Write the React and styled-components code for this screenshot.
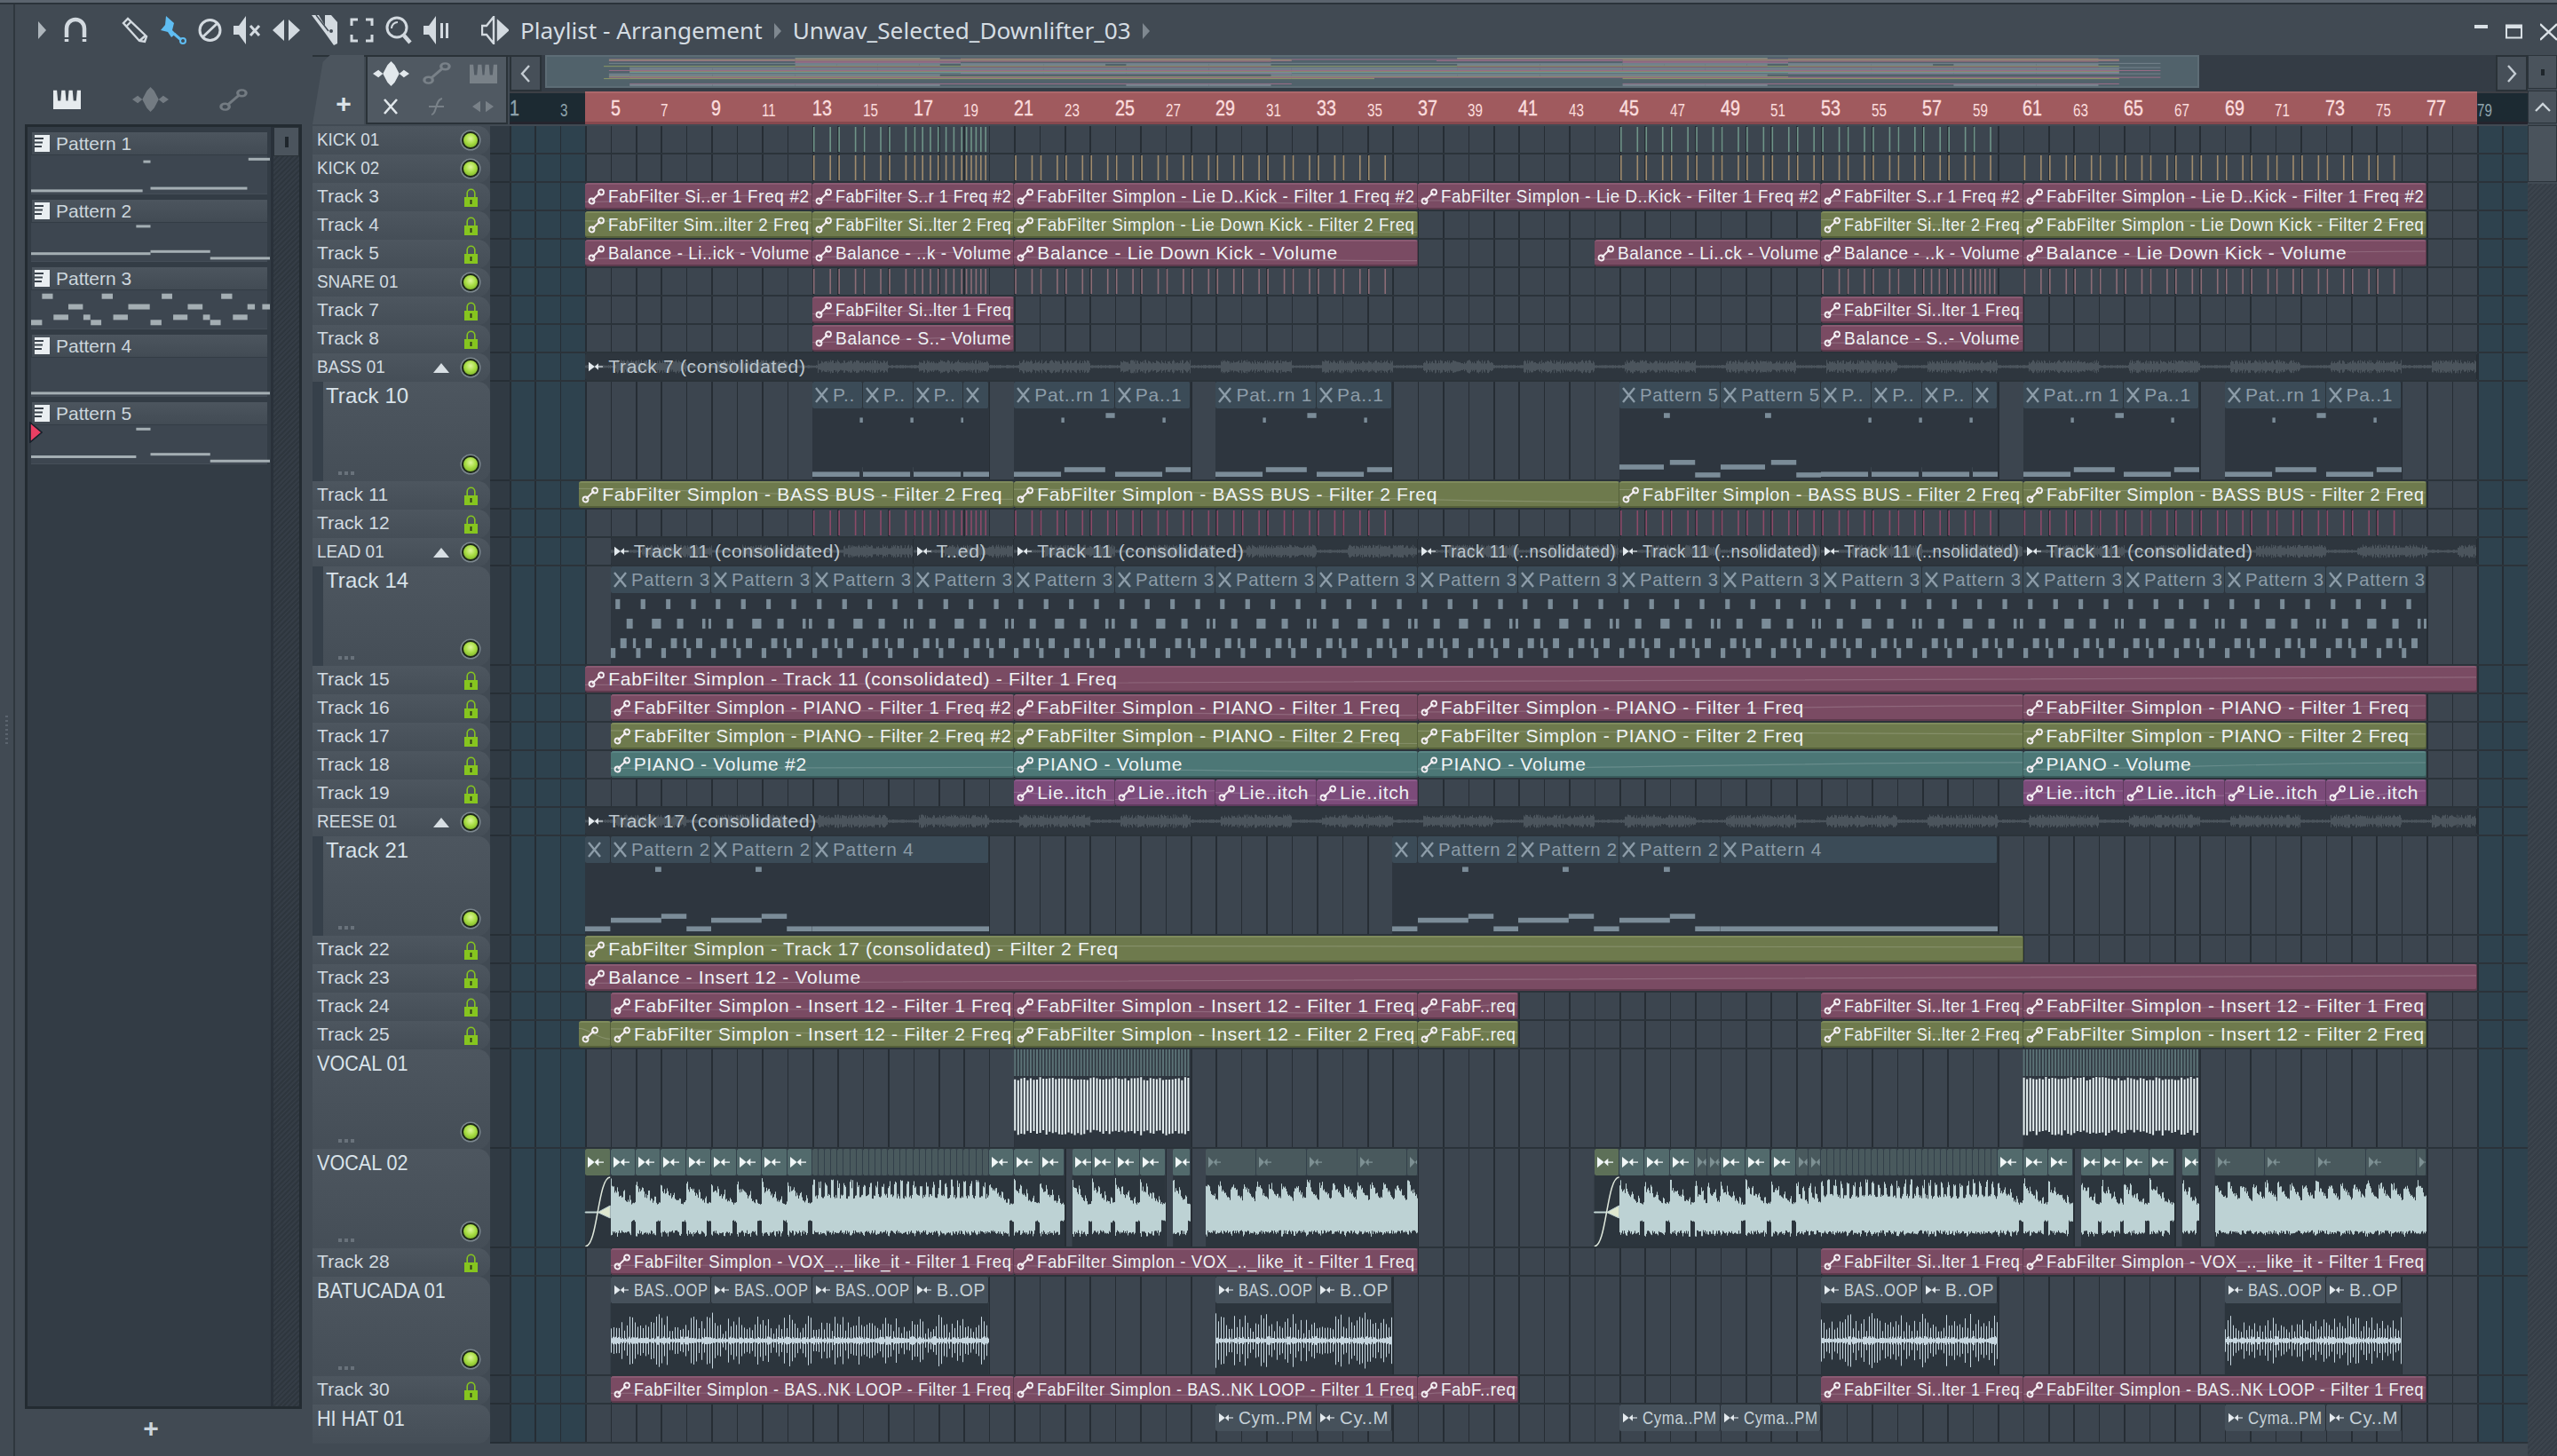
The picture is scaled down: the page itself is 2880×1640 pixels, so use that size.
import React from "react";
import styled, { createGlobalStyle } from "styled-components";

const FONT = `"Liberation Sans", Arial, sans-serif`;
const BAR = 28.41;
const barX = (n) => (n - 1) * BAR;

const GlobalStyle = createGlobalStyle`
  html, body { margin: 0; padding: 0; background: #414a53; }
  body { font-family: ${FONT}; color: #dfe7ec; }
`;

// ---- seeded noise so the wave forms stay the same between runs
const makeRandom = (seed) => {
  let s = seed;
  return () => {
    s = (s * 16807) % 2147483647;
    return (s & 0xffff) / 0xffff;
  };
};

const measureCtx = document.createElement("canvas").getContext("2d");
const LABEL_SPACING = 0.7;
function fitScale(label, room) {
  measureCtx.font = `21px ${FONT}`;
  const natural = measureCtx.measureText(label).width + label.length * LABEL_SPACING;
  return Math.min(1, room / natural);
}

// ---- pattern notes: [from, to, y] as fractions of a 4 bar clip
const PATTERNS = {
  "Pattern 1": {
    h: 0.07,
    notes: [[0.47, 0.5, 0.14], [0.91, 1, 0.07], [0, 0.467, 0.96], [0.5, 0.905, 0.89]],
  },
  "Pattern 2": {
    h: 0.07,
    notes: [[0.44, 0.5, 0.06], [0, 0.5, 0.83], [0.5, 0.75, 0.77], [0.75, 1, 0.96]],
  },
  "Pattern 3": {
    h: 0.14,
    notes: [
      [0.046, 0.091, 0.1], [0.296, 0.342, 0.1], [0.547, 0.591, 0.1], [0.796, 0.842, 0.1],
      [0.156, 0.217, 0.42], [0.407, 0.497, 0.42], [0.656, 0.718, 0.42], [0.906, 0.937, 0.42], [0.968, 1, 0.42],
      [0.094, 0.156, 0.74], [0.219, 0.248, 0.74], [0.344, 0.405, 0.74], [0.595, 0.655, 0.74], [0.72, 0.749, 0.74], [0.845, 0.906, 0.74],
      [0, 0.046, 0.9], [0.25, 0.294, 0.9], [0.5, 0.546, 0.9], [0.75, 0.794, 0.9],
    ],
  },
  "Pattern 4": { h: 0.07, notes: [[0, 3, 0.96]] },
  "Pattern 5": {
    h: 0.07,
    notes: [[0.44, 0.5, 0.07], [0, 0.44, 0.85], [0.5, 0.75, 0.78], [0.75, 1, 0.97]],
  },
};

const auto = (tone, list) =>
  list.map(([start, end, label]) => ({ type: "auto", tone, start, end, label }));
const audio = (list) => list.map(([start, end, label]) => ({ type: "audio", start, end, label }));
const pat = (name, list) =>
  list.map(([start, end, label, offset]) => ({ type: "pattern", name, start, end, label, offset }));

const repeatFour = (from, count, name) =>
  Array.from({ length: count }, (_, i) => [from + i * 4, from + (i + 1) * 4, name]);

const tickRuns = (tone, seed, runs) => ({ tone, seed, runs });

const F1 = "FabFilter Simplon - Lie D..Kick - Filter 1 Freq #2";
const F2 = "FabFilter Simplon - Lie Down Kick - Filter 2 Freq";
const BAL = "Balance - Lie Down Kick - Volume";
const BB = "FabFilter Simplon - BASS BUS - Filter 2 Freq";
const T11 = "Track 11 (consolidated)";
const T11B = "Track 11 (..nsolidated)";
const P1 = "FabFilter Simplon - PIANO - Filter 1 Freq";
const P2 = "FabFilter Simplon - PIANO - Filter 2 Freq";
const I1 = "FabFilter Simplon - Insert 12 - Filter 1 Freq";
const I2 = "FabFilter Simplon - Insert 12 - Filter 2 Freq";
const VX = "FabFilter Simplon - VOX_.._like_it - Filter 1 Freq";
const BL = "FabFilter Simplon - BAS..NK LOOP - Filter 1 Freq";
const S1 = "FabFilter Si..lter 1 Freq";
const S2 = "FabFilter Si..lter 2 Freq";

const TRACKS = [
  { name: "KICK 01", led: true, ticks: tickRuns("#6f9488", 3, [[13, 20], [45, 60]]) },
  { name: "KICK 02", led: true, ticks: tickRuns("#a08c6e", 7, [[13, 20], [21, 36], [45, 60], [61, 76]]) },
  {
    name: "Track 3",
    clips: auto("pink", [
      [4, 13, "FabFilter Si..er 1 Freq #2"], [13, 21, "FabFilter S..r 1 Freq #2"], [21, 37, F1],
      [37, 53, F1], [53, 61, "FabFilter S..r 1 Freq #2"], [61, 77, F1],
    ]),
  },
  {
    name: "Track 4",
    clips: auto("olive", [
      [4, 13, "FabFilter Sim..ilter 2 Freq"], [13, 21, S2], [21, 37, F2], [53, 61, S2], [61, 77, F2],
    ]),
  },
  {
    name: "Track 5",
    clips: auto("pink", [
      [4, 13, "Balance - Li..ick - Volume"], [13, 21, "Balance - ..k - Volume"], [21, 37, BAL],
      [44, 53, "Balance - Li..ck - Volume"], [53, 61, "Balance - ..k - Volume"], [61, 77, BAL],
    ]),
  },
  { name: "SNARE 01", led: true, ticks: tickRuns("#8c6c76", 11, [[13, 20], [21, 36], [53, 60], [61, 76]]) },
  { name: "Track 7", clips: auto("pink", [[13, 21, S1], [53, 61, S1]]) },
  { name: "Track 8", clips: auto("pink", [[13, 21, "Balance - S..- Volume"], [53, 61, "Balance - S..- Volume"]]) },
  { name: "BASS 01", led: true, group: true, clips: audio([[4, 79, "Track 7 (consolidated)"]]) },
  {
    name: "Track 10",
    child: true,
    clips: [
      ...pat("Pattern 1", [[13, 15, "P.."], [15, 17, "P.."], [17, 19, "P.."], [19, 20, ""]]),
      ...pat("Pattern 1", [[21, 25, "Pat..rn 1"], [25, 28, "Pa..1"], [29, 33, "Pat..rn 1"], [33, 36, "Pa..1"]]),
      ...pat("Pattern 5", [[45, 49, "Pattern 5"], [49, 53, "Pattern 5"]]),
      ...pat("Pattern 1", [[53, 55, "P.."], [55, 57, "P.."], [57, 59, "P.."], [59, 60, ""]]),
      ...pat("Pattern 1", [[61, 65, "Pat..rn 1"], [65, 68, "Pa..1"], [69, 73, "Pat..rn 1"], [73, 76, "Pa..1"]]),
    ],
  },
  { name: "Track 11", clips: auto("olive", [[3.75, 21, BB], [21, 45, BB], [45, 61, BB], [61, 77, BB]]) },
  { name: "Track 12", ticks: tickRuns("#8c4a68", 17, [[13, 20], [21, 36], [45, 60], [61, 76]]) },
  {
    name: "LEAD 01",
    led: true,
    group: true,
    clips: audio([[5, 17, T11], [17, 21, "T..ed)"], [21, 37, T11], [37, 45, T11B], [45, 53, T11B], [53, 61, "Track 11 (..nsolidated)"], [61, 79, T11]]),
  },
  { name: "Track 14", child: true, clips: pat("Pattern 3", repeatFour(5, 18, "Pattern 3")) },
  { name: "Track 15", clips: auto("pink", [[4, 79, "FabFilter Simplon - Track 11 (consolidated) - Filter 1 Freq"]]) },
  {
    name: "Track 16",
    clips: auto("pink", [[5, 21, "FabFilter Simplon - PIANO - Filter 1 Freq #2"], [21, 37, P1], [37, 61, P1], [61, 77, P1]]),
  },
  {
    name: "Track 17",
    clips: auto("olive", [[5, 21, "FabFilter Simplon - PIANO - Filter 2 Freq #2"], [21, 37, P2], [37, 61, P2], [61, 77, P2]]),
  },
  {
    name: "Track 18",
    clips: auto("teal", [[5, 21, "PIANO - Volume #2"], [21, 37, "PIANO - Volume"], [37, 61, "PIANO - Volume"], [61, 77, "PIANO - Volume"]]),
  },
  {
    name: "Track 19",
    clips: auto("purple", repeatFour(21, 4, "Lie..itch").concat(repeatFour(61, 4, "Lie..itch"))),
  },
  { name: "REESE 01", led: true, group: true, clips: audio([[4, 79, "Track 17 (consolidated)"]]) },
  {
    name: "Track 21",
    child: true,
    clips: [
      ...pat("Pattern 2", [[4, 5, "", 3], [5, 9, "Pattern 2"], [9, 13, "Pattern 2"]]),
      ...pat("Pattern 4", [[13, 20, "Pattern 4"]]),
      ...pat("Pattern 2", [[36, 37, "", 3], [37, 41, "Pattern 2"], [41, 45, "Pattern 2"], [45, 49, "Pattern 2"]]),
      ...pat("Pattern 4", [[49, 60, "Pattern 4"]]),
    ],
  },
  { name: "Track 22", clips: auto("olive", [[4, 61, "FabFilter Simplon - Track 17 (consolidated) - Filter 2 Freq"]]) },
  { name: "Track 23", clips: auto("pink", [[4, 79, "Balance - Insert 12 - Volume"]]) },
  {
    name: "Track 24",
    clips: auto("pink", [[5, 21, I1], [21, 37, I1], [37, 41, "FabF..req"], [53, 61, S1], [61, 77, I1]]),
  },
  {
    name: "Track 25",
    clips: auto("olive", [[3.75, 5, ""], [5, 21, I2], [21, 37, I2], [37, 41, "FabF..req"], [53, 61, S2], [61, 77, I2]]),
  },
  { name: "VOCAL 01", led: true, tall: true, big: true, wave: "stripes" },
  { name: "VOCAL 02", led: true, tall: true, big: true, wave: "vocal" },
  {
    name: "Track 28",
    clips: auto("pink", [[5, 21, VX], [21, 37, VX], [53, 61, S1], [61, 77, VX]]),
  },
  {
    name: "BATUCADA 01",
    led: true,
    tall: true,
    big: true,
    wave: "batucada",
    clips: audio([
      [5, 9, "BAS..OOP"], [9, 13, "BAS..OOP"], [13, 17, "BAS..OOP"], [17, 20, "B..OP"],
      [29, 33, "BAS..OOP"], [33, 36, "B..OP"], [53, 57, "BAS..OOP"], [57, 60, "B..OP"],
      [69, 73, "BAS..OOP"], [73, 76, "B..OP"],
    ]).map((c) => ({ ...c, type: "loop" })),
  },
  {
    name: "Track 30",
    clips: auto("pink", [[5, 21, BL], [21, 37, BL], [37, 41, "FabF..req"], [53, 61, S1], [61, 77, BL]]),
  },
  {
    name: "HI HAT 01",
    big: true,
    last: true,
    clips: audio([
      [29, 33, "Cym..PM"], [33, 36, "Cy..M"], [45, 49, "Cyma..PM"], [49, 53, "Cyma..PM"],
      [69, 73, "Cyma..PM"], [73, 76, "Cy..M"],
    ]).map((c) => ({ ...c, type: "loop" })),
  },
];

const TONES = {
  pink: { base: "#7a4b63", top: "#8a5a72", low: "#5e3a4d" },
  olive: { base: "#6e7a4d", top: "#7f8b5c", low: "#55603a" },
  teal: { base: "#4c7776", top: "#5a8685", low: "#3a5d5d" },
  purple: { base: "#7c4b7a", top: "#8c5a8a", low: "#5f3a5e" },
};

// ---- layout
const Screen = styled.div`
  width: 2880px;
  height: 1640px;
  display: flex;
  flex-direction: column;
  overflow: hidden;
  background: #414a53;
`;
const TopStrip = styled.div`
  height: 3px;
  flex: none;
  background: #5b646e;
  border-bottom: 2px solid #2b333a;
`;
const Window = styled.div`
  flex: 1;
  display: flex;
  min-height: 0;
`;
const Grip = styled.div`
  width: 15px;
  flex: none;
  border-right: 2px solid #2f373e;
  display: flex;
  align-items: center;
  justify-content: center;
`;
const GripDots = styled.div`
  width: 3px;
  height: 34px;
  background: repeating-linear-gradient(180deg, #5b646e 0 2px, transparent 2px 5px);
`;
const Main = styled.div`
  flex: 1;
  display: flex;
  flex-direction: column;
  min-width: 0;
`;
const TitleBar = styled.div`
  height: 57px;
  flex: none;
  display: flex;
  align-items: center;
  padding-left: 25px;
  color: #d4dce2;
`;
const ToolIcon = styled.svg`
  flex: none;
  margin-right: ${(p) => p.$gap ?? 13}px;
  color: ${(p) => p.$color || "#d3dae0"};
`;
const Title = styled.div`
  font-family: "Noto Sans", sans-serif;
  font-size: 26.2px;
  color: #d5dde3;
  white-space: nowrap;
  display: flex;
  align-items: center;
`;
const Crumb = styled.span`
  width: 0;
  height: 0;
  margin: 2px 13px 0 13px;
  border-top: 9px solid transparent;
  border-bottom: 9px solid transparent;
  border-left: 8px solid #7f8890;
`;
const WindowButtons = styled.div`
  margin-left: auto;
  display: flex;
  align-items: center;
  gap: 20px;
  padding-top: 4px;
`;
const Body = styled.div`
  flex: 1;
  display: flex;
  min-height: 0;
`;

// ---- left picker
const Picker = styled.div`
  width: 328px;
  flex: none;
  display: flex;
  flex-direction: column;
  padding-left: 11px;
  box-sizing: border-box;
`;
const PickerTabs = styled.div`
  height: 78px;
  flex: none;
  display: flex;
  align-items: center;
  padding-top: 22px;
  box-sizing: border-box;
`;
const PickerTab = styled.div`
  width: 94px;
  display: flex;
  justify-content: center;
  opacity: ${(p) => (p.$dim ? 0.3 : 1)};
  color: #e6ebee;
`;
const PickerBox = styled.div`
  width: 312px;
  height: 1447px;
  flex: none;
  display: flex;
  background: #333c45;
  border: 3px solid #232b31;
  box-sizing: border-box;
`;
const PatternList = styled.div`
  flex: 1;
  padding: 6px 4px 0 4px;
  position: relative;
  min-width: 0;
`;
const PatternItem = styled.div`
  margin-bottom: 6px;
`;
const PatternHead = styled.div`
  height: 25px;
  margin: 0 0 1px 1px;
  display: flex;
  align-items: center;
  gap: 7px;
  background: linear-gradient(180deg, #4c555e, #424b54);
  padding-left: 3px;
  font-size: 21px;
  color: #ccd6dd;
`;
const PatternPreview = styled.div`
  height: 43px;
  background: #3d4650;
  border-bottom: 1px solid #454e58;
`;
const Pointer = styled.svg`
  position: absolute;
  left: 2px;
  top: 332px;
`;
const PickerScroll = styled.div`
  width: 29px;
  flex: none;
  display: flex;
  flex-direction: column;
  border-left: 3px solid #29313a;
  background: repeating-linear-gradient(135deg, #353d46 0 2px, #2e363e 2px 4px);
`;
const ScrollCap = styled.div`
  height: 31px;
  background: #4b545d;
  border: 1px solid #2a3238;
  display: flex;
  align-items: center;
  justify-content: center;
`;
const ScrollMark = styled.div`
  width: 4px;
  height: ${(p) => p.$h || 12}px;
  background: #1f262c;
`;
const PickerFoot = styled.div`
  flex: 1;
  display: flex;
  align-items: center;
  justify-content: center;
  padding-bottom: 9px;
  font-size: 30px;
  font-weight: 700;
  color: #ccd5dc;
  width: 284px;
`;

// ---- playlist
const Playlist = styled.div`
  flex: 1;
  display: flex;
  min-width: 0;
  padding-left: 7px;
`;
const PlayColumn = styled.div`
  flex: 1;
  display: flex;
  flex-direction: column;
  min-width: 0;
`;
const PlayHead = styled.div`
  height: 80px;
  flex: none;
  display: flex;
`;
const Corner = styled.div`
  width: 222px;
  flex: none;
  display: flex;
  gap: 2px;
  padding-right: 2px;
  box-sizing: border-box;
  padding-bottom: 2px;
  background: linear-gradient(180deg, #2a3238 0 2px, transparent 2px);
`;
const AddTab = styled.div`
  width: 58px;
  flex: none;
  display: flex;
  align-items: flex-end;
  justify-content: center;
  padding: 0 0 8px 12px;
  box-sizing: border-box;
  background: #4c555e;
  clip-path: polygon(0 100%, 20% 10%, 34% 0, 100% 0, 100% 100%);
  font-weight: 700;
  font-size: 30px;
  line-height: 30px;
  color: #dbe2e7;
`;
const ModeGrid = styled.div`
  flex: 1;
  display: grid;
  grid-template-columns: repeat(3, 1fr);
  grid-template-rows: 1fr 1fr;
  place-items: center;
  background: #505962;
  border: 2px solid #2a3238;
`;
const ModeIcon = styled.div`
  display: flex;
  opacity: ${(p) => (p.$dim ? 0.28 : 1)};
  color: #e2e8ec;
`;
const Strip = styled.div`
  flex: 1;
  display: flex;
  flex-direction: column;
  min-width: 0;
`;
const OverviewRow = styled.div`
  height: 41px;
  flex: none;
  display: flex;
  background: #343c45;
`;
const NavButton = styled.div`
  width: 36px;
  flex: none;
  display: flex;
  align-items: center;
  justify-content: center;
  background: #464f58;
  border: 2px solid #2a3238;
  box-sizing: border-box;
  color: #c4ccd3;
`;
const Overview = styled.svg`
  display: block;
  margin-left: 4px;
  flex: none;
  background: #51626b;
  border: 2px solid #5d6c75;
  box-sizing: border-box;
`;
const Spacer = styled.div`
  flex: 1;
`;
const Ruler = styled.div`
  height: 37px;
  flex: none;
  display: flex;
  background:
    linear-gradient(
      90deg,
      transparent ${barX(4)}px,
      #a05a5e ${barX(4)}px,
      #a05a5e ${barX(79)}px,
      transparent ${barX(79)}px
    ),
    #1c2a32;
  box-shadow: inset 0 2px 0 rgba(255, 190, 190, 0.14), inset 0 -3px 0 rgba(60, 20, 30, 0.25);
`;
const RulerMark = styled.div`
  width: ${BAR * 2}px;
  flex: none;
  display: flex;
  align-items: flex-end;
  padding-bottom: 6px;
  box-sizing: border-box;
  line-height: 1;
  font-size: ${(p) => (p.$major ? 24 : 20)}px;
  color: ${(p) => p.$color};
`;
const RulerText = styled.span`
  display: inline-block;
  transform: scaleX(${(p) => (p.$major ? 0.82 : 0.76)});
  transform-origin: 0 100%;
  -webkit-text-stroke: ${(p) => (p.$major ? "0.4px" : "0")};
`;
const Tracks = styled.div`
  flex: 1;
  display: flex;
  flex-direction: column;
  min-height: 0;
`;
const TrackRow = styled.div`
  height: ${(p) => p.$h}px;
  flex: none;
  display: flex;
`;
const TrackLabel = styled.div`
  width: 200px;
  flex: none;
  position: relative;
  box-sizing: border-box;
  display: flex;
  align-items: ${(p) => (p.$tall ? "flex-start" : "center")};
  justify-content: space-between;
  padding: ${(p) => (p.$tall ? "1px" : "0")} 10px 0 ${(p) => (p.$child ? 15 : 5)}px;
  line-height: 30px;
  background: linear-gradient(180deg, #4d565f, #454e57);
  border-radius: 0 14px 14px 0;
  font-size: ${(p) => (p.$big ? 24 : 21)}px;
  color: ${(p) => (p.$big ? "#d9e3ea" : "#d2dbe1")};
  white-space: nowrap;
  box-shadow: ${(p) => (p.$child ? "inset 12px 0 0 #36404a" : "none")};
`;
const LabelName = styled.span`
  display: inline-block;
  position: relative;
  top: ${(p) => (p.$tall ? 0 : -1.5)}px;
  transform: scaleX(${(p) => (p.$caps ? 0.9 : 1)});
  transform-origin: 0 50%;
  letter-spacing: ${(p) => (p.$caps ? 0 : 0.1)}px;
`;
const LabelRight = styled.div`
  display: flex;
  align-items: center;
  gap: 12px;
`;
const MarkSlot = styled.div`
  width: 24px;
  display: flex;
  justify-content: center;
`;
const Triangle = styled.div`
  width: 0;
  height: 0;
  border-left: 9px solid transparent;
  border-right: 9px solid transparent;
  border-bottom: 11px solid #d8dfe4;
`;
const Led = styled.div`
  width: 16px;
  height: 16px;
  border-radius: 50%;
  background: radial-gradient(circle at 50% 38%, #dcf59a 0, #a9de45 45%, #6da51e 100%);
  border: 2px solid #1f2a1a;
  box-shadow: 0 0 0 1.5px #7b868e;
`;
const BottomLed = styled(Led)`
  position: absolute;
  right: 12px;
  bottom: 9px;
`;
const Dots = styled.div`
  position: absolute;
  left: 29px;
  bottom: 7px;
  width: 19px;
  height: 4px;
  background: repeating-linear-gradient(90deg, #69727b 0 4px, transparent 4px 7px);
`;
const Gutter = styled.div`
  width: 22px;
  flex: none;
  background: #303a43;
  border-bottom: 2px solid #262e35;
  box-sizing: border-box;
`;
const Timeline = styled.div`
  flex: 1;
  position: relative;
  overflow: hidden;
  box-sizing: border-box;
  border-bottom: 2px solid #2b333a;
  background:
    repeating-linear-gradient(90deg, #262d34 0 1.6px, transparent 1.6px ${BAR}px),
    linear-gradient(
      90deg,
      #2e424e ${barX(4)}px,
      #3c454f ${barX(4)}px,
      #3c454f ${barX(79)}px,
      #2e424e ${barX(79)}px
    );
`;
const AutoClip = styled.div`
  position: absolute;
  top: 0;
  height: 30px;
  box-sizing: border-box;
  display: flex;
  align-items: center;
  overflow: hidden;
  border-radius: 3px;
  padding-left: 3px;
  background: ${(p) => TONES[p.$tone].base};
  border-top: 2px solid ${(p) => TONES[p.$tone].top};
  border-bottom: 2px solid ${(p) => TONES[p.$tone].low};
  border-right: 1px solid ${(p) => TONES[p.$tone].low};
  font-size: 21px;
  letter-spacing: ${LABEL_SPACING}px;
  color: #eef3f5;
  white-space: nowrap;
`;
const AudioClip = styled.div`
  position: absolute;
  top: 0;
  height: 30px;
  box-sizing: border-box;
  display: flex;
  align-items: center;
  overflow: hidden;
  border-radius: 2px;
  padding-left: 4px;
  background: ${(p) => (p.$loop ? "#46515b" : "#2e363e")};
  border-right: 1px solid #262d34;
  font-size: 21px;
  letter-spacing: ${LABEL_SPACING}px;
  color: ${(p) => (p.$loop ? "#c7d2d9" : "#bcc6ce")};
  white-space: nowrap;
`;
const ClipText = styled.span`
  position: relative;
  display: inline-block;
  flex: none;
  margin-left: ${(p) => p.$gap ?? 4}px;
  transform-origin: 0 50%;
`;
const ClipSketch = styled.svg`
  position: absolute;
  left: 0;
  top: 0;
`;
const PatternClip = styled.div`
  position: absolute;
  top: 0;
  bottom: 0;
  overflow: hidden;
  background: #2e363f;
`;
const PatternTitle = styled.div`
  height: 30px;
  display: flex;
  align-items: center;
  padding-left: 3px;
  border-radius: 2px;
  border-right: 1px solid #2b333a;
  background: #3b4b57;
  font-size: 21px;
  letter-spacing: ${LABEL_SPACING}px;
  color: #8c9ca8;
  white-space: nowrap;
  overflow: hidden;
`;
const NoteBody = styled.svg`
  display: block;
`;
const TickStrip = styled.svg`
  position: absolute;
  left: 0;
  top: 0;
`;
const WaveLayer = styled.svg`
  position: absolute;
  left: 0;
  top: 0;
`;
const HeadBlock = styled.div`
  position: absolute;
  top: 0;
  height: 30px;
  box-sizing: border-box;
  border-radius: 2px;
  display: flex;
  align-items: center;
  padding-left: 3px;
  background: ${(p) => (p.$first ? "#5d7058" : p.$faded ? "#49595d" : "#526a6c")};
  border-right: 1px solid #33404a;
  overflow: hidden;
  color: ${(p) => (p.$faded ? "#7d9093" : "#f0f6f6")};
`;
const BowColor = styled.span`
  display: flex;
  flex: none;
  position: relative;
  color: #e4eaee;
`;

// ---- scroll column
const VScroll = styled.div`
  width: 33px;
  flex: none;
  display: flex;
  flex-direction: column;
  gap: 2px;
`;
const VButton = styled.div`
  height: ${(p) => p.$h}px;
  flex: none;
  display: flex;
  align-items: center;
  justify-content: center;
  background: #4a535c;
  border: 1px solid #2c343b;
  box-sizing: border-box;
  color: #cdd5db;
`;
const VTrack = styled.div`
  flex: 1;
  background: repeating-linear-gradient(135deg, #3c444d 0 2px, #353d46 2px 4px);
`;

// ---- drawings
const AutoIcon = () => (
  <svg width="20" height="19" viewBox="0 0 20 19" style={{ flex: "none", position: "relative" }}>
    <path d="M5 14 L14 5" stroke="#f4e9ef" strokeWidth="2" />
    <circle cx="4.5" cy="14.5" r="3" fill="none" stroke="#f4f0f4" strokeWidth="1.8" />
    <circle cx="15" cy="4.5" r="3" fill="none" stroke="#f4f0f4" strokeWidth="1.8" />
  </svg>
);
const BowTie = ({ w = 16, h = 12 }) => (
  <svg width={w} height={h} viewBox="0 0 19 16" preserveAspectRatio="none" style={{ flex: "none", position: "relative" }} fill="currentColor">
    <path d="M0 1 L8 8 L0 15 Z" />
    <path d="M8 8 L13 3 L13 13 Z" />
    <path d="M12 7 H19 V9 H12 Z" opacity="0.75" />
  </svg>
);
const XIcon = () => (
  <svg width="15" height="18" viewBox="0 0 15 18" style={{ flex: "none" }} fill="none" stroke="currentColor" strokeWidth="2.4">
    <path d="M1 1 L14 17 M14 1 L1 17" />
  </svg>
);
const Lock = () => (
  <svg width="15" height="21" viewBox="0 0 15 21">
    <path d="M3.2 10 V5.5 a4.3 4.3 0 0 1 8.6 0 V10" fill="none" stroke="#86c51f" strokeWidth="1.6" />
    <rect x="0" y="10" width="15" height="11" fill="#86c51f" />
    <rect x="6.5" y="13" width="2" height="5" fill="#2e3a1a" />
  </svg>
);
const PianoIcon = () => (
  <svg width="31" height="22" viewBox="0 0 30 30" preserveAspectRatio="none" fill="currentColor">
    <path d="M0 1 H4 L5 17 H8 L9 1 H13 L14 17 H16 L17 1 H21 L22 17 H25 L26 1 H30 V30 H0 Z" />
  </svg>
);
const RowPiano = () => (
  <svg width="17" height="19" viewBox="0 0 17 19" style={{ flex: "none" }}>
    <path d="M0 0 H17 V19 H0 Z" fill="#e9eef1" />
    <path d="M0 4 H10 M0 8.5 H9 M0 13 H8" stroke="#39424b" strokeWidth="2" />
  </svg>
);
const WaveIcon = () => (
  <svg width="41" height="28" viewBox="0 0 40 40" preserveAspectRatio="none" fill="currentColor">
    <path d="M0 20 L6 14 L11 20 L16 6 L20 0 L24 6 L29 20 L34 14 L40 20 L34 26 L29 20 L24 34 L20 40 L16 34 L11 20 L6 26 Z" />
  </svg>
);
const LinkIcon = () => (
  <svg width="32" height="25" viewBox="0 0 34 36" preserveAspectRatio="none" fill="none" stroke="currentColor" strokeWidth="3.5">
    <circle cx="7" cy="29" r="5" />
    <circle cx="27" cy="7" r="5" />
    <path d="M11 25 L23 11" />
  </svg>
);

function clipWidth(c) {
  return barX(c.end) - barX(c.start);
}

// ---- generated drawings, worked out once
function tickPositions(start, end) {
  const out = [];
  const span = end - start;
  let b = start;
  let long = true;
  while (b < end) {
    out.push(b);
    const t = (b - start) / span;
    let step = long ? 0.65 : 0.35;
    long = !long;
    if (span < 9 && t > 0.55) step = 0.31;
    if (span < 9 && t > 0.8) step = 0.19;
    b += step;
  }
  return out;
}

function TickLane({ ticks }) {
  const xs = ticks.runs.flatMap(([a, b]) => tickPositions(a, b));
  return (
    <TickStrip width="2273" height="30">
      {xs.map((b, i) => (
        <rect key={i} x={barX(b) + 1} y="1" width="1.6" height="28" fill={ticks.tone} />
      ))}
    </TickStrip>
  );
}

function NoteRoll({ name, width, height, offset = 0, scale = 4 * BAR, fill = "#7b8c98" }) {
  const p = PATTERNS[name];
  const nh = p.h * height;
  return (
    <NoteBody width={width} height={height}>
      {p.notes.map(([a, b, y], i) => (
        <rect
          key={i}
          x={(a * scale) - offset * BAR}
          y={y * (height - nh)}
          width={(b - a) * scale}
          height={nh}
          fill={fill}
        />
      ))}
    </NoteBody>
  );
}

const VOCAL_A = [
  ["first", 4, 5], ["on", 5, 6], ["on", 6, 7], ["on", 7, 8], ["on", 8, 9], ["on", 9, 10], ["on", 10, 11], ["on", 11, 12], ["on", 12, 13],
];
const VOCAL_TAIL = [
  ["on", 20, 21], ["on", 21, 22], ["on", 22, 23],
  ["on", 23.3, 24.1], ["on", 24.1, 25], ["on", 25, 26], ["on", 26, 27], ["on", 27.3, 28],
];
const VOCAL_B = [
  ["first", 44, 45], ["on", 45, 46], ["on", 46, 47], ["on", 47, 48], ["dim", 48, 48.5], ["dim", 48.5, 49],
  ["on", 49, 50], ["on", 50, 51], ["on", 51, 52], ["dim", 52, 52.5], ["dim", 52.5, 53],
];
const shift = (list, by) => list.map(([k, a, b]) => [k, a + by, b + by]);
const stripeBlocks = (a, b) => {
  const out = [];
  for (let x = a; x < b - 0.01; x += 0.25) out.push(["stripe", x, x + 0.25]);
  return out;
};
const fadeBlocks = (a, b) => {
  const out = [];
  for (let x = a; x < b - 0.01; x += 2) out.push(["fade", x, Math.min(b, x + 2)]);
  return out;
};
const VOCAL_SEGMENTS = [
  ...VOCAL_A, ...stripeBlocks(13, 20), ...VOCAL_TAIL, ...fadeBlocks(28.6, 37),
  ...VOCAL_B, ...stripeBlocks(53, 60), ...shift(VOCAL_TAIL, 40), ...fadeBlocks(68.6, 77),
];

function vocalPath() {
  const rnd = makeRandom(4242);
  const mid = 39;
  let d = "";
  VOCAL_SEGMENTS.forEach(([kind, a, b]) => {
    if (kind === "first") {
      const x0 = barX(a);
      d += `M${x0} ${mid}L${x0 + 15} ${mid}L${x0 + 28} ${mid - 7}L${x0 + 28} ${mid + 7}L${x0 + 15} ${mid + 1}L${x0} ${mid + 1}Z`;
      return;
    }
    const x0 = Math.round(barX(a));
    const x1 = Math.round(barX(b));
    for (let x = x0; x < x1; x += 1) {
      const t = (x - x0) / (x1 - x0);
      // each slice opens on a tall spike and then falls away in steps
      const ripple = kind === "fade" ? (x - x0) % 14 : (x - x0) % 7;
      let amp;
      if (kind === "stripe") amp = ripple < 3 ? 1 : 0.55;
      else if (kind === "dim") amp = ripple < 3 ? 1 - t * 0.4 : 0.7 - t * 0.4;
      else if (kind === "fade") amp = ripple < 4 ? 1 - t * 0.2 : 1 - (ripple / 14) * 0.6;
      else amp = Math.max(0.3, (ripple < 2 ? 1.05 : 0.86) - t * 0.72);
      const up = 37 * amp * (0.72 + rnd() * 0.28);
      const low = kind === "on" && t > 0.8 ? 0.45 : 1;
      const dn = 28 * low * (ripple < 2 ? 1 : 0.9) * (0.82 + rnd() * 0.18);
      d += `M${x + 0.5} ${mid - up}V${mid + dn}`;
    }
  });
  return d;
}

function batucadaPath() {
  const rnd = makeRandom(909);
  const runs = [[5, 20], [29, 36], [53, 60], [69, 76]];
  let d = "";
  runs.forEach(([a, b]) => {
    const x0 = Math.round(barX(a));
    const x1 = Math.round(barX(b));
    for (let x = x0; x < x1; x += 1) {
      const spike = (x - x0) % 3 === 0 ? 1 : 0.16;
      const group = 0.62 + 0.38 * Math.abs(Math.cos((x - x0) / 9));
      const h = Math.max(1.5, 32 * spike * group * (0.35 + rnd() * 0.65));
      d += `M${x + 0.5} ${40 - h}V${40 + h}`;
    }
  });
  return d;
}

function stripePath(y0, y1, jitter) {
  const rnd = makeRandom(77 + y0);
  let d = "";
  [[21, 28], [61, 68]].forEach(([a, b]) => {
    for (let x = barX(a) + 1; x < barX(b); x += 3.55) {
      const top = y0 + rnd() * jitter;
      const low = y1 - rnd() * jitter * 1.6;
      d += `M${x.toFixed(1)} ${top.toFixed(1)}V${low.toFixed(1)}`;
    }
  });
  return d;
}

const VOCAL_D = vocalPath();
const BATUCADA_D = batucadaPath();
const STRIPE_HEAD = stripePath(0, 30, 0);
const STRIPE_BODY = stripePath(31, 97, 4);

function audioShade(clip, seed) {
  const rnd = makeRandom(seed * 37 + Math.round(clip.start * 10));
  const w = Math.round(clipWidth(clip));
  let d = "";
  for (let x = 0; x < w; x += 1) {
    const bar = (x / BAR) % 4;
    const h = (bar < 1.2 ? 1 : 5) * (0.5 + rnd() * 0.9) + 0.6;
    d += `M${x + 0.5} ${15 - h}V${15 + h}`;
  }
  return d;
}

// faint automation line that runs behind a clip label
function autoCurve(clip, tone) {
  const w = clipWidth(clip);
  const rnd = makeRandom(Math.round(clip.start * 97) + tone.length * 13);
  const y0 = 6 + rnd() * 16;
  const y1 = 6 + rnd() * 16;
  return `M0 ${y0} C${w * 0.3} ${y0} ${w * 0.6} ${y1} ${w} ${y1}`;
}

const scaleStyle = (label, room) => ({ transform: `scaleX(${fitScale(label, room).toFixed(3)})` });

function Clip({ clip, rowIndex }) {
  const left = barX(clip.start);
  const width = clipWidth(clip);
  if (clip.type === "auto") {
    return (
      <AutoClip $tone={clip.tone} style={{ left, width }}>
        <ClipSketch width={width} height="28">
          <path d={autoCurve(clip, clip.tone)} stroke="rgba(255,255,255,0.16)" strokeWidth="1.2" fill="none" />
        </ClipSketch>
        <AutoIcon />
        <ClipText $gap={3} style={scaleStyle(clip.label, width - 29)}>{clip.label}</ClipText>
      </AutoClip>
    );
  }
  if (clip.type === "audio" || clip.type === "loop") {
    const loop = clip.type === "loop";
    return (
      <AudioClip $loop={loop} style={{ left, width }}>
        {!loop && (
          <ClipSketch width={width} height="30">
            <path d={audioShade(clip, rowIndex)} stroke="#4b545c" strokeWidth="1" />
          </ClipSketch>
        )}
        <BowColor><BowTie /></BowColor>
        <ClipText $gap={6} style={scaleStyle(clip.label, width - 30)}>{clip.label}</ClipText>
      </AudioClip>
    );
  }
  return (
    <PatternClip style={{ left, width }}>
      <PatternTitle>
        <XIcon />
        <ClipText $gap={5} style={scaleStyle(clip.label, width - 25)}>{clip.label}</ClipText>
      </PatternTitle>
      <NoteRoll name={clip.name} width={width} height={80} offset={clip.offset || 0} />
    </PatternClip>
  );
}

function VocalHeads() {
  return VOCAL_SEGMENTS.map(([kind, a, b]) => {
    const blank = kind === "stripe";
    const faded = kind === "dim" || kind === "fade" || blank;
    return (
      <HeadBlock key={a} $first={kind === "first"} $faded={faded} style={{ left: barX(a), width: barX(b) - barX(a) }}>
        {!blank && <BowTie w={faded ? 14 : 18} h={14} />}
      </HeadBlock>
    );
  });
}

function WaveBody({ wave }) {
  if (wave === "stripes") {
    return (
      <WaveLayer width="2273" height="110">
        {[[21, 28], [61, 68]].map(([a, b]) => (
          <rect key={a} x={barX(a)} y="0" width={barX(b) - barX(a)} height="110" fill="#2e363f" />
        ))}
        <path d={STRIPE_HEAD} stroke="#5c7377" strokeWidth="2" />
        <path d={STRIPE_BODY} stroke="#e6f0f2" strokeWidth="2" />
      </WaveLayer>
    );
  }
  if (wave === "vocal") {
    return (
      <>
        <WaveLayer width="2273" height="110">
          {[[4, 23], [23.3, 27], [27.3, 28], [28.6, 37], [44, 63], [63.3, 67], [67.3, 68], [68.6, 77]].map(([a, b]) => (
            <rect key={a} x={barX(a)} y="30" width={barX(b) - barX(a)} height="80" fill="#2c353d" />
          ))}
          <g transform="translate(0 32)">
            <path d={VOCAL_D} stroke="#bdd2d4" strokeWidth="1" fill="#dfe8cf" />
          </g>
          {[4, 44].map((b) => (
            <path
              key={b}
              d={`M${barX(b)} 110 C${barX(b) + 14} 110 ${barX(b) + 14} 32 ${barX(b) + 28} 32`}
              stroke="#dfe8dc"
              strokeWidth="1.5"
              fill="none"
            />
          ))}
        </WaveLayer>
        <VocalHeads />
      </>
    );
  }
  return (
    <WaveLayer width="2273" height="110">
      {[[5, 20], [29, 36], [53, 60], [69, 76]].map(([a, b]) => (
        <rect key={a} x={barX(a)} y="30" width={barX(b) - barX(a)} height="80" fill="#2c353d" />
      ))}
      <g transform="translate(0 32)">
        <path d={BATUCADA_D} stroke="#c6d6df" strokeWidth="1" />
      </g>
    </WaveLayer>
  );
}

const MINI_COLOR = {
  pink: "#9b6d88",
  olive: "#8d9a66",
  teal: "#6f9a9a",
  purple: "#9a7098",
};

function OverviewMap() {
  let y = 0;
  const scale = 33 / 1440;
  const bar = 23.3;
  const items = [];
  TRACKS.forEach((t, ti) => {
    const h = t.child || t.tall ? 112 : 32;
    (t.clips || []).forEach((c, i) => {
      items.push(
        <rect
          key={`${ti}-${i}`}
          x={(c.start - 1) * bar}
          y={1 + y * scale}
          width={(c.end - c.start) * bar}
          height={Math.max(1, h * scale)}
          fill={c.tone ? MINI_COLOR[c.tone] : "#74828c"}
        />
      );
    });
    if (t.ticks) {
      t.ticks.runs.forEach(([a, b], i) =>
        items.push(
          <rect
            key={`t${ti}-${i}`}
            x={(a - 1) * bar}
            y={1 + y * scale}
            width={(b - a) * bar}
            height="1"
            fill={t.ticks.tone}
          />
        )
      );
    }
    y += h;
  });
  return (
    <Overview width="1863" height="37">
      {items}
    </Overview>
  );
}

function TrackLine({ track, index }) {
  const tall = track.child || track.tall;
  const h = track.last ? 44 : tall ? 112 : 32;
  const caps = track.name === track.name.toUpperCase();
  return (
    <TrackRow $h={h}>
      <TrackLabel $tall={tall || track.big} $child={track.child} $big={track.big || track.child}>
        <LabelName $caps={caps} $tall={tall || track.big}>{track.name}</LabelName>
        {!tall && !track.big && (
          <LabelRight>
            {track.group && <Triangle />}
            <MarkSlot>{track.led ? <Led /> : <Lock />}</MarkSlot>
          </LabelRight>
        )}
        {tall && (
          <>
            <BottomLed />
            <Dots />
          </>
        )}
      </TrackLabel>
      <Gutter />
      <Timeline>
        {track.wave && <WaveBody wave={track.wave} />}
        {track.ticks && <TickLane ticks={track.ticks} />}
        {(track.clips || []).map((c) => (
          <Clip key={`${c.start}-${c.label}`} clip={c} rowIndex={index} />
        ))}
      </Timeline>
    </TrackRow>
  );
}

export default function App() {
  const marks = [];
  for (let n = 1; n <= 79; n += 2) marks.push(n);
  return (
    <Screen>
      <GlobalStyle />
      <TopStrip />
      <Window>
        <Grip>
          <GripDots />
        </Grip>
        <Main>
          <TitleBar>
            <ToolIcon $gap={18} width="11" height="22" viewBox="0 0 11 22" fill="#aeb6bc"><path d="M1 1 L10 11 L1 21 Z" /></ToolIcon>
            <ToolIcon $gap={38} width="28" height="30" viewBox="0 0 28 30" fill="none" stroke="currentColor" strokeWidth="4.5">
              <path d="M4 28 V13 a10 10 0 0 1 20 0 V28" />
              <path d="M1 24 H7 M21 24 H27" strokeWidth="2" stroke="#414a53" />
            </ToolIcon>
            <ToolIcon width="30" height="30" viewBox="0 0 30 30" fill="none" stroke="currentColor" strokeWidth="2.4">
              <path d="M2 7 L7 2 L28 22 L26 28 L20 27 Z" />
              <path d="M5 11 L11 5" />
              <path d="M20 27 L27 21" />
            </ToolIcon>
            <ToolIcon $color="#5fbdf2" width="30" height="32" viewBox="0 0 30 32" fill="currentColor">
              <path d="M7 0 L16 8 L14 16 L18 20 L13 24 L9 18 L1 16 L6 10 Z" />
              <path d="M16 20 L24 27" stroke="currentColor" strokeWidth="3" />
              <circle cx="26" cy="28" r="3" fill="none" stroke="currentColor" strokeWidth="2" />
            </ToolIcon>
            <ToolIcon width="27" height="28" viewBox="0 0 27 28" fill="none" stroke="currentColor" strokeWidth="3">
              <circle cx="13.5" cy="14" r="11.5" />
              <path d="M5 22 L22 6" />
            </ToolIcon>
            <ToolIcon width="31" height="32" viewBox="0 0 31 32" fill="currentColor">
              <path d="M0 11 H6 L14 0 V32 L6 21 H0 Z" />
              <path d="M19 11 L29 22 M29 11 L19 22" stroke="currentColor" strokeWidth="3" fill="none" />
            </ToolIcon>
            <ToolIcon width="31" height="28" viewBox="0 0 31 28" fill="currentColor">
              <path d="M0 14 L13 2 V26 Z M31 14 L18 2 V26 Z" />
            </ToolIcon>
            <ToolIcon width="30" height="34" viewBox="0 0 30 34" fill="currentColor">
              <path d="M0 0 H8 L15 12 L15 0 H22 L29 8 V32 L25 34 L15 20 Z" />
              <circle cx="22" cy="18" r="2" fill="#414a53" />
              <path d="M5 0 L19 18" stroke="#414a53" strokeWidth="1.5" />
            </ToolIcon>
            <ToolIcon width="27" height="28" viewBox="0 0 27 28" fill="none" stroke="currentColor" strokeWidth="3">
              <path d="M9 2 H2 V9 M18 2 H25 V9 M9 26 H2 V19 M18 26 H25 V19" />
            </ToolIcon>
            <ToolIcon width="30" height="32" viewBox="0 0 30 32" fill="none" stroke="currentColor" strokeWidth="3">
              <circle cx="13" cy="13" r="11" />
              <path d="M7 14 a7 7 0 0 1 7 -7" strokeWidth="2" />
              <path d="M21 22 L28 30" strokeWidth="4.5" />
            </ToolIcon>
            <ToolIcon $gap={36} width="29" height="32" viewBox="0 0 29 32" fill="currentColor">
              <path d="M0 11 H6 L14 0 V32 L6 21 H0 Z" />
              <rect x="19" y="8" width="3" height="17" />
              <rect x="25" y="8" width="3" height="17" />
            </ToolIcon>
            <ToolIcon $gap={13} width="31" height="32" viewBox="0 0 31 32" fill="none" stroke="currentColor" strokeWidth="2.4">
              <path d="M1 11 H6 L14 1 V31 L6 21 H1 Z" />
              <path d="M19 6 L30 16 L19 26 Z" fill="currentColor" />
            </ToolIcon>
            <Title>
              Playlist - Arrangement
              <Crumb />
              Unwav_Selected_Downlifter_03
              <Crumb />
            </Title>
            <WindowButtons>
              <svg width="15" height="4" style={{ marginBottom: 12 }}><rect width="15" height="4" fill="#d9e0e5" /></svg>
              <svg width="19" height="17"><rect x="1" y="1.5" width="17" height="14" fill="none" stroke="#d9e0e5" strokeWidth="2" /><rect x="1" y="1" width="17" height="4" fill="#d9e0e5" /></svg>
              <svg width="19" height="20"><path d="M0 1 L19 19 M19 1 L0 19" stroke="#d9e0e5" strokeWidth="2.4" /></svg>
            </WindowButtons>
          </TitleBar>
          <Body>
            <Picker>
              <PickerTabs>
                <PickerTab><PianoIcon /></PickerTab>
                <PickerTab $dim><WaveIcon /></PickerTab>
                <PickerTab $dim><LinkIcon /></PickerTab>
              </PickerTabs>
              <PickerBox>
                <PatternList>
                  {Object.keys(PATTERNS).map((name) => (
                    <PatternItem key={name}>
                      <PatternHead>
                        <RowPiano />
                        {name}
                      </PatternHead>
                      <PatternPreview>
                        <NoteRoll name={name} width={269} height={43} scale={269} fill="#a4aeb3" />
                      </PatternPreview>
                    </PatternItem>
                  ))}
                  <Pointer width="15" height="24" viewBox="0 0 15 24">
                    <path d="M1 1 L14 12 L1 23 Z" fill="#e93f63" stroke="#17202a" strokeWidth="1.6" />
                  </Pointer>
                </PatternList>
                <PickerScroll>
                  <ScrollCap><ScrollMark /></ScrollCap>
                </PickerScroll>
              </PickerBox>
              <PickerFoot>+</PickerFoot>
            </Picker>
            <Playlist>
              <PlayColumn>
                <PlayHead>
                  <Corner>
                    <AddTab>+</AddTab>
                    <ModeGrid>
                      <ModeIcon><WaveIcon /></ModeIcon>
                      <ModeIcon $dim><LinkIcon /></ModeIcon>
                      <ModeIcon $dim><PianoIcon /></ModeIcon>
                      <ModeIcon>
                        <svg width="18" height="18" viewBox="0 0 18 18" fill="none" stroke="currentColor" strokeWidth="2.6"><path d="M2 1 L16 17 M16 1 L2 17" /></svg>
                      </ModeIcon>
                      <ModeIcon $dim>
                        <svg width="20" height="20" viewBox="0 0 20 20" fill="none" stroke="currentColor" strokeWidth="2"><path d="M4 19 C10 19 8 2 16 1 M1 10 H18" /></svg>
                      </ModeIcon>
                      <ModeIcon $dim>
                        <svg width="24" height="14" viewBox="0 0 24 18" preserveAspectRatio="none" fill="currentColor"><path d="M0 9 L9 1 V17 Z M24 9 L15 1 V17 Z" /></svg>
                      </ModeIcon>
                    </ModeGrid>
                  </Corner>
                  <Strip>
                    <OverviewRow>
                      <NavButton>
                        <svg width="12" height="22" viewBox="0 0 12 22" fill="none" stroke="currentColor" strokeWidth="2.4"><path d="M10 2 L2 11 L10 20" /></svg>
                      </NavButton>
                      <OverviewMap />
                      <Spacer />
                      <NavButton>
                        <svg width="12" height="22" viewBox="0 0 12 22" fill="none" stroke="currentColor" strokeWidth="2.4"><path d="M2 2 L10 11 L2 20" /></svg>
                      </NavButton>
                    </OverviewRow>
                    <Ruler>
                      {marks.map((n) => (
                        <RulerMark key={n} $major={n % 4 === 1} $color={n < 4 || n >= 79 ? "#8fa4ad" : "#fbdcdc"}>
                          <RulerText $major={n % 4 === 1}>{n}</RulerText>
                        </RulerMark>
                      ))}
                    </Ruler>
                  </Strip>
                </PlayHead>
                <Tracks>
                  {TRACKS.map((t, i) => (
                    <TrackLine key={t.name} track={t} index={i} />
                  ))}
                </Tracks>
              </PlayColumn>
              <VScroll>
                <VButton $h={38}><ScrollMark $h={7} /></VButton>
                <VButton $h={37}>
                  <svg width="20" height="12" viewBox="0 0 20 12" fill="none" stroke="currentColor" strokeWidth="2.4"><path d="M2 10 L10 2 L18 10" /></svg>
                </VButton>
                <VButton $h={64} />
                <VTrack />
              </VScroll>
            </Playlist>
          </Body>
        </Main>
      </Window>
    </Screen>
  );
}
